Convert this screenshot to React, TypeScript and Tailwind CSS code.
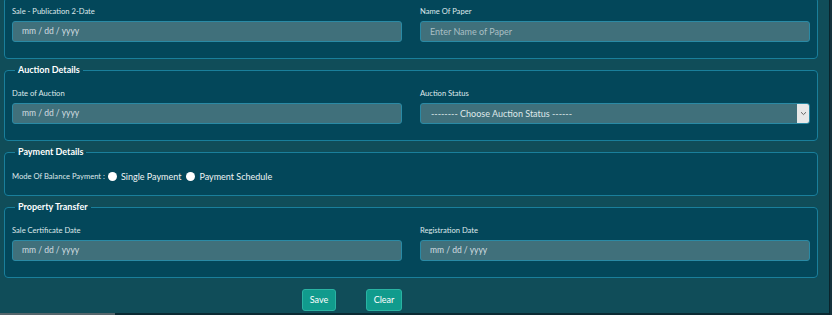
import React from 'react';

const font = { fontFamily: 'Lato, "Open Sans", sans-serif' };

const Label: React.FC<{ text: string }> = ({ text }) => (
  <div className="text-[7.6px] leading-[10px] text-[#dfe8ea] mb-[5px]">{text}</div>
);

const DateBox: React.FC = () => (
  <div className="h-[21px] rounded-[3px] border border-[#2a8aa5] bg-[#40707b] px-[9px] flex items-center text-[8.5px] text-[#d3dde0]">
    mm / dd / yyyy
  </div>
);

const Field: React.FC<{ label: string; children: React.ReactNode }> = ({ label, children }) => (
  <div>
    <Label text={label} />
    {children}
  </div>
);

const Section: React.FC<{ legend?: string; className?: string; children: React.ReactNode }> = ({
  legend,
  className = '',
  children,
}) => (
  <fieldset className={`border border-[#1a7f9b] rounded-[4px] bg-[#03475a] px-[7px] min-w-0 ${className}`}>
    {legend && (
      <legend className="ms-[3px] px-[3px] text-[9px] leading-[12px] font-bold text-white">{legend}</legend>
    )}
    {children}
  </fieldset>
);

export default function App() {
  return (
    <div className="w-[832px] h-[315px] overflow-hidden bg-[#104d59] flex" style={font}>
      <div className="w-[829px] flex flex-col">
        <div className="pl-[4px] pr-[11px] flex flex-col gap-[5px] -mt-[3px]">
          <Section className="pt-[8px] pb-[16px]">
            <div className="grid grid-cols-2 gap-[18px]">
              <Field label="Sale - Publication 2-Date">
                <DateBox />
              </Field>
              <Field label="Name Of Paper">
                <div className="h-[21px] rounded-[3px] border border-[#2a8aa5] bg-[#40707b] px-[9px] flex items-center text-[9px] text-[#aabfc4]">
                  Enter Name of Paper
                </div>
              </Field>
            </div>
          </Section>

          <Section legend="Auction Details" className="pt-[12px] pb-[16px]">
            <div className="grid grid-cols-2 gap-[18px]">
              <Field label="Date of Auction">
                <DateBox />
              </Field>
              <Field label="Auction Status">
                <div className="h-[21px] rounded-[3px] border border-[#2a8aa5] bg-[#40707b] flex items-center text-[9px] text-[#dfe8ea] overflow-hidden">
                  <span className="flex-1 pl-[10px]">-------- Choose Auction Status ------</span>
                  <span className="w-[12px] h-full bg-[#e8e8e8] flex items-center justify-center">
                    <svg width="7" height="5" viewBox="0 0 7 5">
                      <path d="M1 1.2 L3.5 3.6 L6 1.2" fill="none" stroke="#666" strokeWidth="1" />
                    </svg>
                  </span>
                </div>
              </Field>
            </div>
          </Section>

          <Section legend="Payment Details" className="pt-[12px] pb-[12px]">
            <div className="flex items-center h-[13px] text-[9px] text-[#eef3f4]">
              <span className="text-[7.6px] text-[#dfe8ea]">Mode Of Balance Payment :</span>
              <span className="ml-[3px] w-[9px] h-[9px] rounded-full bg-white" />
              <span className="ml-[4px]">Single Payment</span>
              <span className="ml-[5px] w-[9px] h-[9px] rounded-full bg-white" />
              <span className="ml-[4px]">Payment Schedule</span>
            </div>
          </Section>

          <Section legend="Property Transfer" className="pt-[12px] pb-[16px]">
            <div className="grid grid-cols-2 gap-[18px]">
              <Field label="Sale Certificate Date">
                <DateBox />
              </Field>
              <Field label="Registration Date">
                <DateBox />
              </Field>
            </div>
          </Section>
        </div>

        <div className="grid grid-cols-2 gap-[18px] pl-[12px] pr-[19px] mt-[11px]">
          <div className="flex justify-end gap-[30px]">
            <button className="h-[22px] w-[34px] rounded-[3px] border border-[#2ab3a3] bg-[#119b8d] text-[9px] text-white">
              Save
            </button>
            <button className="h-[22px] w-[36px] rounded-[3px] border border-[#2ab3a3] bg-[#119b8d] text-[9px] text-white">
              Clear
            </button>
          </div>
          <div />
        </div>

        <div className="mt-auto h-[2px] flex">
          <div className="w-[115px] bg-[#55656b]" />
          <div className="flex-1 bg-[#0b2a33]" />
        </div>
      </div>
      <div className="w-[3px] bg-[#15333d] border-l border-[#0a242c]" />
    </div>
  );
}
